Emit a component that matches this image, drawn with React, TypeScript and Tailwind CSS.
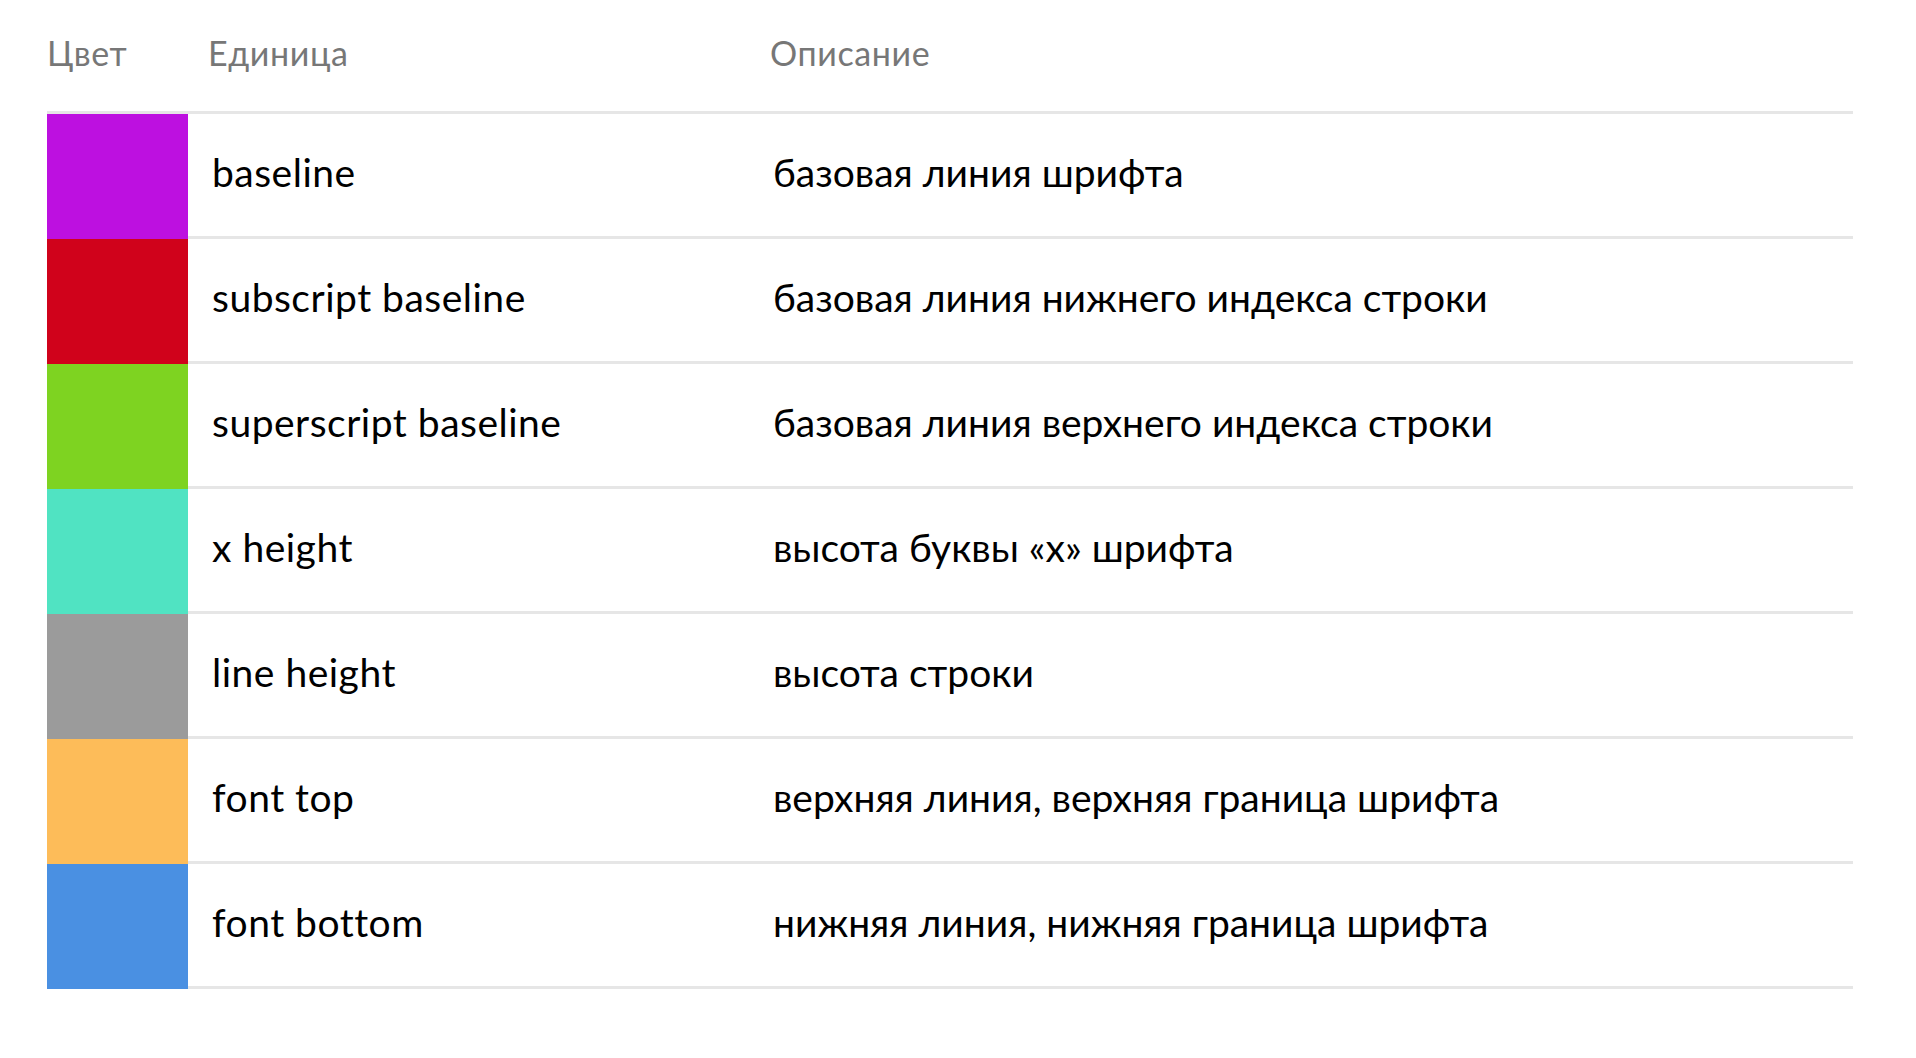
const rows = [
  { color: "bg-[#bd10e0]", unit: "baseline", desc: "базовая линия шрифта" },
  { color: "bg-[#d0021b]", unit: "subscript baseline", desc: "базовая линия нижнего индекса строки" },
  { color: "bg-[#7ed321]", unit: "superscript baseline", desc: "базовая линия верхнего индекса строки" },
  { color: "bg-[#50e3c2]", unit: "x height", desc: "высота буквы «x» шрифта" },
  { color: "bg-[#9b9b9b]", unit: "line height", desc: "высота строки" },
  { color: "bg-[#fdbc59]", unit: "font top", desc: "верхняя линия, верхняя граница шрифта" },
  { color: "bg-[#4a90e2]", unit: "font bottom", desc: "нижняя линия, нижняя граница шрифта" },
];

const App = () => {
  return (
    <div className="min-h-screen bg-white font-['Lato',sans-serif]">
      <div className="ml-[47px] w-[1806px]">
        {/* Header */}
        <div className="grid h-[114px] grid-cols-[141px_563px_1fr] border-b-[3px] border-[#e6e6e6] pt-[33px] text-[34px] leading-[1.2] tracking-[0.6px] text-[#777777]">
          <div>Цвет</div>
          <div className="pl-[20px]">Единица</div>
          <div className="pl-[19px]">Описание</div>
        </div>

        {/* Rows */}
        {rows.map((row) => (
          <div key={row.unit} className="flex h-[125px]">
            <div className={`w-[141px] shrink-0 ${row.color}`} />
            <div className="grid flex-1 grid-cols-[563px_1fr] items-center border-b-[3px] border-[#e6e6e6] pb-[5px] text-[39px] leading-[1.2] text-black">
              <div className="pl-[24px] tracking-[0.5px]">{row.unit}</div>
              <div className="pl-[22px]">{row.desc}</div>
            </div>
          </div>
        ))}
      </div>
    </div>
  );
};

export default App;
